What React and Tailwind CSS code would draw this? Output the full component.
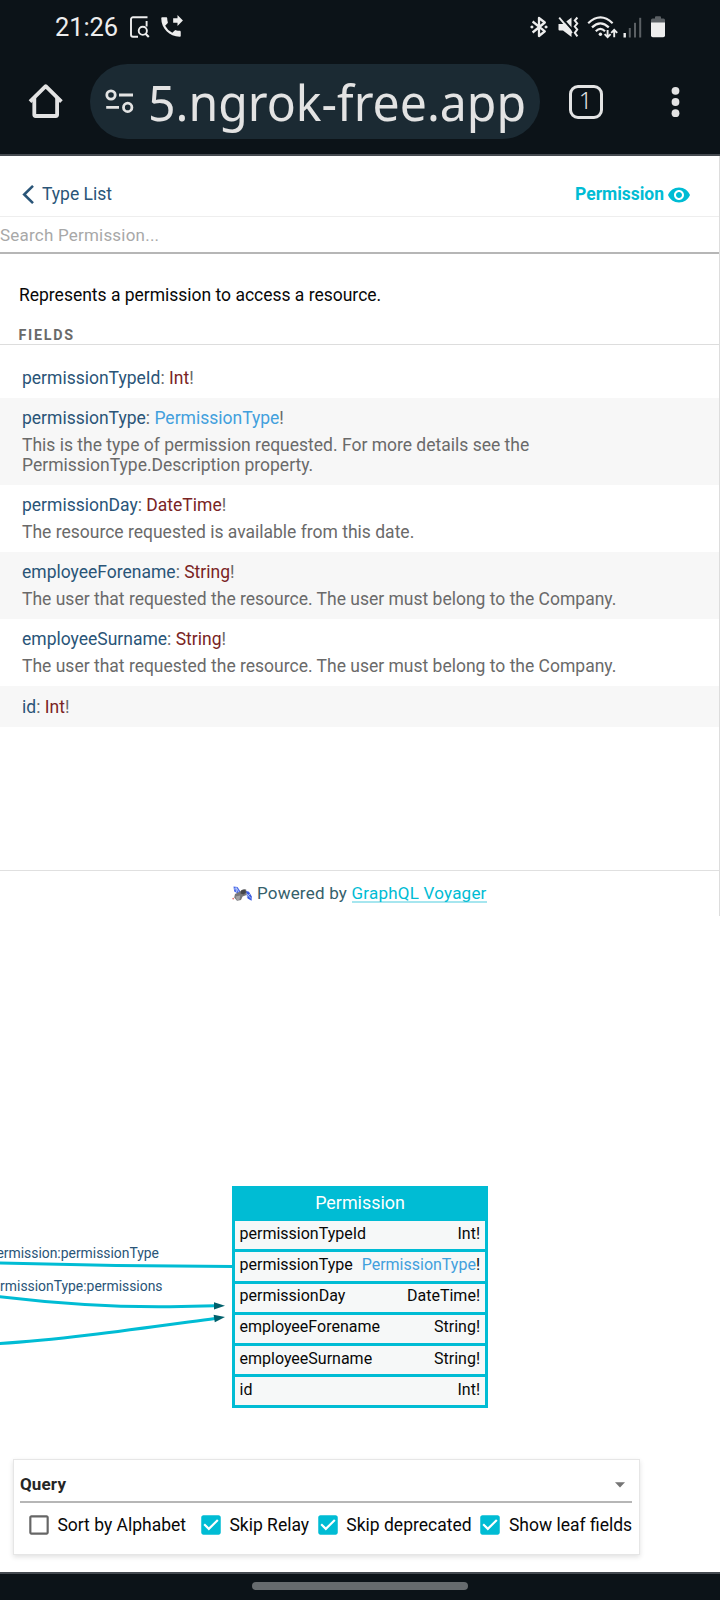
import React from "react";
import { MdVisibility, MdPhoneForwarded } from "react-icons/md";

const fields = [
  { name: "permissionTypeId", type: "Int" },
  {
    name: "permissionType",
    type: "PermissionType",
    link: true,
    text: "This is the type of permission requested. For more details see the PermissionType.Description property.",
  },
  { name: "permissionDay", type: "DateTime", text: "The resource requested is available from this date." },
  {
    name: "employeeForename",
    type: "String",
    text: "The user that requested the resource. The user must belong to the Company.",
  },
  {
    name: "employeeSurname",
    type: "String",
    text: "The user that requested the resource. The user must belong to the Company.",
  },
  { name: "id", type: "Int" },
];

function StatusBar() {
  return (
    <div className="flex h-[54px] items-center pl-[55px] pr-[55px] text-[#ededed]">
      <span className="mr-[13px] w-[62px] whitespace-nowrap text-[25.5px] leading-[30px] tracking-[-0.1px]">21:26</span>
      <svg className="h-[22px] w-[20px]" viewBox="0 0 20 22" fill="none" stroke="currentColor" strokeWidth="1.9">
        <path d="M17.5 1.3H3A2 2 0 0 0 1 3.3V18.7A2 2 0 0 0 3 20.7H8M16.6 5V10.5" />
        <circle cx="12.8" cy="14.8" r="4.1" />
        <path d="M15.5 17.7L18.8 21" strokeWidth="2.2" />
      </svg>
      <MdPhoneForwarded className="ml-[8px] h-[26px] w-[26px]" />
      <div className="ml-auto flex items-center">
        <svg className="h-[22px] w-[18px]" viewBox="0 0 18 22" fill="none" stroke="currentColor" strokeWidth="2.3">
          <path d="M2.6 5.5L14.8 15.3L9 20V2L14.8 6.5L2.6 16.5" strokeLinejoin="round" />
          <path d="M0 11L2 9.2L3.8 11L2 12.8ZM14.2 11L16 9.2L18 11L16 12.8Z" fill="currentColor" stroke="none" />
        </svg>
        <svg className="ml-[10px] h-[22px] w-[21px]" viewBox="0 0 21 22">
          <path d="M0.5 8H5L13.5 1.5V21L5 14.5H1.5Q0.5 14.5 0.5 13.5Z" fill="currentColor" />
          <path d="M3 1L16 15.6" stroke="#0c1318" strokeWidth="2" />
          <path d="M1.2 1.6L14 17" stroke="currentColor" strokeWidth="1.9" />
          <path d="M19.4 1.5L16.8 4.5L19.2 7.5L16.8 10.5L19.2 13.5L16.8 16.8L19.4 20.3" fill="none" stroke="currentColor" strokeWidth="2" />
        </svg>
        <svg className="ml-[8px] h-[23px] w-[31px]" viewBox="0 0 31 23" fill="none" stroke="currentColor">
          <g strokeWidth="2.2">
            <path d="M1.2 7.2Q13.5 -4.5 25.6 7.2" />
            <path d="M5 11.4Q13.4 3.4 21.8 11.4" />
            <path d="M8.8 15.2Q13.4 10.6 18 15.2" />
          </g>
          <circle cx="13.4" cy="18.3" r="1.7" fill="currentColor" stroke="none" />
          <path d="M20.6 14V21.2M17.6 18.2L20.6 21.2L23.6 18.2M27.2 21.2V13.8M24.2 16.8L27.2 13.8L30.2 16.8" strokeWidth="1.9" />
        </svg>
        <svg className="ml-[5px] h-[21px] w-[20px]" viewBox="0 0 20 21">
          <rect x="0.5" y="16" width="2.4" height="4.5" fill="#ededed" />
          <rect x="5.8" y="11" width="2" height="9.5" fill="#5b6064" />
          <rect x="11" y="5.8" width="2" height="14.7" fill="#5b6064" />
          <rect x="16.2" y="0.8" width="2" height="19.7" fill="#5b6064" />
        </svg>
        <svg className="ml-[8px] h-[22px] w-[14px]" viewBox="0 0 14 22">
          <path d="M4 2.5V1.2Q4 0.2 5 0.2H9Q10 0.2 10 1.2V2.5H12.5Q14 2.5 14 4V7H0V4Q0 2.5 1.5 2.5Z" fill="#5b6064" />
          <path d="M0 6.5H14V19.5Q14 21.3 12.2 21.3H1.8Q0 21.3 0 19.5Z" fill="#ededed" />
        </svg>
      </div>
    </div>
  );
}

function BrowserBar() {
  return (
    <div className="mt-[10px] flex h-[75px] items-center pl-[28px] text-[#e3e3e3]">
      <svg className="-mt-px h-[36px] w-[36px]" viewBox="0 0 36 36" fill="none" stroke="currentColor" strokeWidth="3.8" strokeLinejoin="round">
        <path d="M2 18.6L17.7 3.2L33.4 18.6" />
        <path d="M6.3 14.5V31.8Q6.3 33 7.6 33H27.8Q29.1 33 29.1 31.8V14.5" />
      </svg>
      <div className="ml-[26px] flex h-[75px] w-[450px] items-center overflow-hidden rounded-full bg-[#1b2a33] pl-[15px]">
        <svg className="-mt-px h-[26px] w-[30px] shrink-0" viewBox="0 0 30 26" fill="none" stroke="currentColor" strokeWidth="2.8">
          <circle cx="6" cy="7" r="4.2" />
          <path d="M14 7H28M1.2 19.4H14" />
          <circle cx="22.7" cy="19.4" r="4.2" />
        </svg>
        <span className="ml-[13px] inline-block origin-left scale-x-[0.963] whitespace-nowrap font-['Noto_Sans',sans-serif] text-[50px] leading-[68px]">
          5.ngrok-free.app
        </span>
      </div>
      <div className="ml-[28.5px] flex h-[34px] w-[34px] items-center justify-center rounded-[9px] border-[3.5px] border-[#e3e3e3] pb-[4px] font-['Noto_Sans',sans-serif] text-[23px] font-light leading-[24px]">
        1
      </div>
      <svg className="ml-[66.5px] h-[36px] w-[14px]" viewBox="0 0 14 36" fill="currentColor">
        <circle cx="6.5" cy="6.8" r="3.9" />
        <circle cx="6.5" cy="18" r="3.9" />
        <circle cx="6.5" cy="29.2" r="3.9" />
      </svg>
    </div>
  );
}

function Satellite() {
  return (
    <svg className="mr-[4.5px] h-[16px] w-[20px]" viewBox="0 0 20 16">
      <path d="M1.5 0.5L5.5 1L8.5 5.5L7 8L2.2 5.6Z" fill="#4a68e8" />
      <path d="M2 3L5 2.6L7 7M4 1L4.5 6" fill="none" stroke="#c4d6fb" strokeWidth="0.8" />
      <path d="M13.6 4.8L17 5.8L19.8 10.5L19.6 14.8L15.6 12.6Z" fill="#3a5ae0" />
      <path d="M14.5 7.5L19 12.5M14.5 11L18 8" stroke="#c4d6fb" strokeWidth="0.8" />
      <path d="M3 8L8 5.5L11 3.2L14.2 3.6L14.6 9L10.6 10.4L9 14L5 14.8L2.2 11.5Z" fill="#77777a" />
      <path d="M9 4.6L13.2 3.6L14 6.5L11.5 8.5L8.5 7.6Z" fill="#45464a" />
      <path d="M3.5 10.5L8.2 9.6L7.6 13.4L5 14.6Z" fill="#a2a2a5" />
      <circle cx="1.2" cy="12.6" r="0.9" fill="#e8716e" />
    </svg>
  );
}

function DocPanel() {
  return (
    <div className="flex h-[760px] shrink-0 flex-col border-r border-[#dddddd]">
      <div className="flex h-[61px] shrink-0 items-start border-b border-[#eeeeee] pl-[22px] pr-[28px] pt-[28px]">
        <svg className="mt-px h-[19px] w-[12px]" viewBox="0 0 12 19" fill="none" stroke="#2a5578" strokeWidth="2.6">
          <path d="M11 0.9L2.2 9.5L11 18.1" />
        </svg>
        <span className="ml-[8px] text-[#2a5578]">Type List</span>
        <span className="ml-auto font-bold tracking-[-0.02px] text-[#00bcd4]">Permission</span>
        <MdVisibility className="-mt-px ml-[3px] h-[24px] w-[24px] text-[#00bcd4]" />
      </div>
      <div className="h-[37px] shrink-0 border-b-2 border-[#b6b6b6] pt-[8px] text-[17px] tracking-[0.21px] text-[#a8a8a8]">
        Search Permission...
      </div>
      <p className="mt-[31px] pl-[19px] tracking-[-0.01px] text-[#080808]">Represents a permission to access a resource.</p>
      <div className="mt-[22px] h-[18px] shrink-0 border-b border-[#dddddd] pl-[18.5px] text-[14.3px] font-bold leading-[16px] tracking-[1.72px] text-[#6a6a6a]">
        FIELDS
      </div>
      <div className="mt-[13px]">
        {fields.map((f) => (
          <div key={f.name} className="py-[10.05px] pl-[22px] pr-[22px] text-[#6a6a6a] even:bg-[#f7f7f7]">
            <div>
              <span className="text-[#2a5578]">{f.name}</span>:{" "}
              <span className={f.link ? "text-[#42a0dd]" : "text-[#7a2424]"}>{f.type}</span>!
            </div>
            {f.text && <p className="mt-[7px] max-w-[640px]">{f.text}</p>}
          </div>
        ))}
      </div>
      <div className="mt-auto flex h-[46px] items-start justify-center border-t border-[#e0e0e0] pt-[12px] text-[17px] leading-[20px] tracking-[0.22px] text-[#35606b]">
        <div className="pt-[3px]">
          <Satellite />
        </div>
        <span className="whitespace-pre">Powered by </span>
        <a className="h-[20px] border-b-2 border-[#a6e6ef] text-[#00bcd4]">GraphQL Voyager</a>
      </div>
    </div>
  );
}

function Graph() {
  return (
    <div className="relative h-[543px] shrink-0 overflow-hidden">
      <svg className="absolute left-0 top-0 h-[543px] w-[720px]" viewBox="0 916 720 543">
        <g fill="none" stroke="#00bcd4" strokeWidth="3">
          <path d="M-2 1263C60 1264.8 140 1266.4 233 1266.4" />
          <path d="M-2 1296.5C60 1304 120 1307.2 170 1306.7L215 1305.8" />
          <path d="M-2 1343.6C60 1340 140 1328.5 215 1318.4" />
        </g>
        <g fill="#00606c">
          <path d="M214 1302.2L225 1305.7L214 1309.4Z" />
          <path d="M213.6 1314.8L225 1317L214.8 1322.2Z" />
        </g>
        <g fill="#2a5578" fontSize="13.9" textAnchor="end">
          <text x="159" y="1258">ermission:permissionType</text>
          <text x="162.5" y="1291">rmissionType:permissions</text>
        </g>
      </svg>
      <div className="absolute left-[232px] top-[270.4px] flex w-[256px] flex-col bg-[#00bcd4] px-[3px] pb-[3px] text-[16px]">
        <div className="h-[34.9px] pt-[6.7px] text-center text-[17.9px] text-white">Permission</div>
        <div className="flex flex-col gap-[3px]">
          {fields.map((f) => (
            <div key={f.name} className="flex h-[28.2px] justify-between bg-[#f6f8f8] pl-[4.5px] pr-[5px] pt-[2.5px] text-[#080808]">
              <span>{f.name}</span>
              <span>
                <span className={f.link ? "text-[#42a0dd]" : ""}>{f.type}</span>!
              </span>
            </div>
          ))}
        </div>
      </div>
    </div>
  );
}

function Option({ label, checked, className }) {
  return (
    <label className={`flex items-center ${className || ""}`}>
      <svg className="mr-[5.6px] h-[26px] w-[26px]" viewBox="0 0 24 24">
        {checked ? (
          <path
            fill="#00bcd4"
            d="M19 3H5c-1.11 0-2 .9-2 2v14c0 1.1.89 2 2 2h14c1.11 0 2-.9 2-2V5c0-1.1-.89-2-2-2zm-9 14l-5-5 1.41-1.41L10 14.17l7.59-7.59L19 8l-9 9z"
          />
        ) : (
          <path
            fill="#666666"
            d="M19 5v14H5V5h14m0-2H5c-1.1 0-2 .9-2 2v14c0 1.1.9 2 2 2h14c1.1 0 2-.9 2-2V5c0-1.1-.9-2-2-2z"
          />
        )}
      </svg>
      <span className="whitespace-nowrap">{label}</span>
    </label>
  );
}

function QueryBox() {
  return (
    <div className="ml-[13px] h-[96px] w-[627px] shrink-0 border border-[#e6e6e6] pl-[6px] pr-[7px] shadow-[0_2px_5px_rgba(0,0,0,0.12)]">
      <div className="flex h-[43px] items-start justify-between border-b-2 border-[#b6b6b6] pr-[7.5px] pt-[14px]">
        <span className="text-[17px] font-bold tracking-[0.15px] text-[#262626]">Query</span>
        <svg className="mt-[8px] h-[6px] w-[10px]" viewBox="0 0 10 6">
          <path d="M0 0.3H10L5 5.6Z" fill="#757575" />
        </svg>
      </div>
      <div className="flex pl-[5.8px] pt-[9px] text-[#080808]">
        <Option label="Sort by Alphabet" />
        <Option label="Skip Relay" checked className="ml-[11.8px]" />
        <Option label="Skip deprecated" checked className="ml-[5.6px]" />
        <Option label="Show leaf fields" checked className="ml-[5.8px]" />
      </div>
    </div>
  );
}

export default function App() {
  return (
    <div className="flex h-[1600px] w-[720px] flex-col overflow-hidden bg-white font-['Roboto',sans-serif] text-[17.5px] leading-[20px]">
      <header className="h-[156px] shrink-0 border-b-2 border-[#454a50] bg-[#0c1318]">
        <StatusBar />
        <BrowserBar />
      </header>
      <DocPanel />
      <Graph />
      <QueryBox />
      <footer className="mt-auto flex h-[28px] shrink-0 justify-center border-t-2 border-[#454a50] bg-[#0c1318] pt-[8px]">
        <div className="h-[8px] w-[216px] rounded-full bg-[#666b6e]" />
      </footer>
    </div>
  );
}
